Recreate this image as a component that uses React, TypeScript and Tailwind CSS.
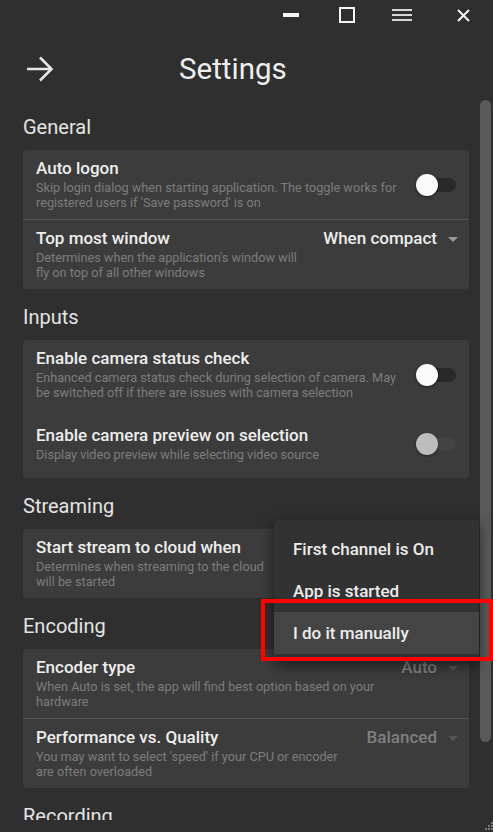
import React from "react";

type Row = {
  title: string;
  desc: string;
  toggle?: "on" | "off" | "disabled";
  select?: string;
  selectMuted?: boolean;
};

type Section = { name: string; rows: Row[]; dividers?: boolean };

const sections: Section[] = [
  {
    name: "General",
    dividers: true,
    rows: [
      {
        title: "Auto logon",
        desc: "Skip login dialog when starting application. The toggle works for registered users if 'Save password' is on",
        toggle: "off",
      },
      {
        title: "Top most window",
        desc: "Determines when the application's window will fly on top of all other windows",
        select: "When compact",
      },
    ],
  },
  {
    name: "Inputs",
    rows: [
      {
        title: "Enable camera status check",
        desc: "Enhanced camera status check during selection of camera. May be switched off if there are issues with camera selection",
        toggle: "off",
      },
      {
        title: "Enable camera preview on selection",
        desc: "Display video preview while selecting video source",
        toggle: "disabled",
      },
    ],
  },
  {
    name: "Streaming",
    rows: [
      {
        title: "Start stream to cloud when",
        desc: "Determines when streaming to the cloud will be started",
        select: "First channel is On",
      },
    ],
  },
  {
    name: "Encoding",
    dividers: true,
    rows: [
      {
        title: "Encoder type",
        desc: "When Auto is set, the app will find best option based on your hardware",
        select: "Auto",
        selectMuted: true,
      },
      {
        title: "Performance vs. Quality",
        desc: "You may want to select 'speed' if your CPU or encoder are often overloaded",
        select: "Balanced",
        selectMuted: true,
      },
    ],
  },
];

const Toggle = ({ state }: { state: "on" | "off" | "disabled" }) => {
  const disabled = state === "disabled";
  return (
    <div className="relative w-[40px] h-[22px] shrink-0 mr-[2px]">
      <div
        className={
          disabled
            ? "absolute left-[2px] right-0 top-[4px] h-[14px] rounded-full bg-[#434343]"
            : "absolute left-[2px] right-0 top-[4px] h-[14px] rounded-full bg-[#292929]"
        }
      />
      <div
        className={
          disabled
            ? "absolute left-0 top-0 w-[22px] h-[22px] rounded-full bg-[#bdbdbd] shadow-[0_1px_3px_rgba(0,0,0,0.4)]"
            : "absolute left-0 top-0 w-[22px] h-[22px] rounded-full bg-[#fafafa] shadow-[0_1px_3px_rgba(0,0,0,0.5)]"
        }
      />
    </div>
  );
};

const Select = ({ value, muted }: { value: string; muted?: boolean }) => (
  <div className="flex items-center self-start shrink-0 gap-[11px]">
    <span
      className={
        muted
          ? "text-[17px] leading-[20px] font-medium text-[#7f7f7f] whitespace-nowrap"
          : "text-[17px] leading-[20px] font-medium text-[#ececec] whitespace-nowrap"
      }
    >
      {value}
    </span>
    <svg width="10" height="5" viewBox="0 0 10 5" className="mt-[2px]">
      <path d="M0 0h10L5 5z" fill={muted ? "#565656" : "#9a9a9a"} />
    </svg>
  </div>
);

const SettingRow = ({ row }: { row: Row }) => (
  <div className="h-[69px] flex items-center gap-4 pl-[13px] pr-[11px] py-2">
    <div className="flex-1 min-w-0 self-center">
      <div className="text-[17px] leading-[20px] font-medium text-[#eeeeee]">{row.title}</div>
      <div className="mt-[3px] text-[12.7px] leading-[14.7px] text-[#7c7c7c]">{row.desc}</div>
    </div>
    {row.toggle && <Toggle state={row.toggle} />}
    {row.select && <Select value={row.select} muted={row.selectMuted} />}
  </div>
);

const App = () => {
  return (
    <div className="relative w-[493px] h-[832px] overflow-hidden bg-[#2f2f2f] font-['Roboto',sans-serif] text-[#ececec]">
      {/* window controls */}
      <div className="h-[32px] flex items-start justify-end">
        <div className="w-[16px] h-[4px] mt-[13px] bg-[#f5f5f5]" />
        <div className="ml-[40px] mt-[7px] w-[16px] h-[16px] border-2 border-[#f5f5f5]" />
        <div className="ml-[37px] mt-[9px] w-[20px] flex flex-col gap-[3px]">
          <div className="h-[2px] bg-[#d6d6d6]" />
          <div className="h-[2px] bg-[#d6d6d6]" />
          <div className="h-[2px] bg-[#d6d6d6]" />
        </div>
        <svg width="13" height="13" viewBox="0 0 13 13" className="ml-[45px] mt-[9px] mr-[23px]">
          <path d="M1 1l11 11M12 1L1 12" stroke="#f5f5f5" strokeWidth="2" />
        </svg>
      </div>

      {/* header */}
      <div className="h-[68px] pt-[6px] flex items-center">
        <svg width="28" height="26" viewBox="0 0 28 26" className="ml-[26px]">
          <path d="M1 13h25M14 1.5L25.5 13 14 24.5" fill="none" stroke="#e6e6e6" strokeWidth="2.6" />
        </svg>
        <h1 className="ml-[125px] text-[29.5px] leading-[34px] text-[#eeeeee]">Settings</h1>
      </div>

      {/* body */}
      <div className="flex h-[720px]">
        <div className="w-[469px] pl-[23px] pt-[15px] overflow-hidden">
          {sections.map((s, i) => (
            <div key={s.name} className={i === 0 ? "" : "mt-4"}>
              <h2 className="text-[20px] leading-[24px] text-[#e4e4e4]">{s.name}</h2>
              <div className="mt-[11px] rounded bg-[#3c3c3c]">
                {s.rows.map((r, j) => (
                  <div key={r.title} className={s.dividers && j > 0 ? "border-t border-[#555555]" : ""}>
                    <SettingRow row={r} />
                  </div>
                ))}
              </div>
            </div>
          ))}
          <div className="mt-4">
            <h2 className="text-[20px] leading-[24px] text-[#e4e4e4]">Recording</h2>
          </div>
        </div>
        <div className="w-[24px] pl-[11px]">
          <div className="w-[11px] h-[642px] rounded-full bg-[#595959]" />
        </div>
      </div>

      {/* resize grip */}
      <svg width="10" height="10" viewBox="0 0 10 10" className="absolute right-0 bottom-0">
        <rect x="8" y="0" width="2" height="2" fill="#777" />
        <rect x="5" y="3" width="2" height="2" fill="#777" />
        <rect x="8" y="3" width="2" height="2" fill="#777" />
        <rect x="2" y="6" width="2" height="2" fill="#777" />
        <rect x="5" y="6" width="2" height="2" fill="#777" />
        <rect x="8" y="6" width="2" height="2" fill="#777" />
      </svg>

      {/* open dropdown menu */}
      <div className="absolute left-[274px] top-[520px] w-[205px] pt-2 pb-[6px] bg-[#323232] rounded shadow-[0_5px_14px_rgba(0,0,0,0.55)]">
        <div className="h-[42px] flex items-center pl-[19px] text-[17px] leading-[20px] font-medium text-[#ececec]">
          First channel is On
        </div>
        <div className="h-[42px] flex items-center pl-[19px] text-[17px] leading-[20px] font-medium text-[#ececec]">
          App is started
        </div>
        <div className="h-[42px] flex items-center pl-[19px] text-[17px] leading-[20px] font-medium text-[#ececec] bg-[#444444]">
          I do it manually
        </div>
      </div>

      {/* highlight annotation */}
      <div className="absolute left-[261px] top-[599px] w-[232px] h-[62px] border-4 border-[#ff0000]" />
    </div>
  );
};

export default App;
